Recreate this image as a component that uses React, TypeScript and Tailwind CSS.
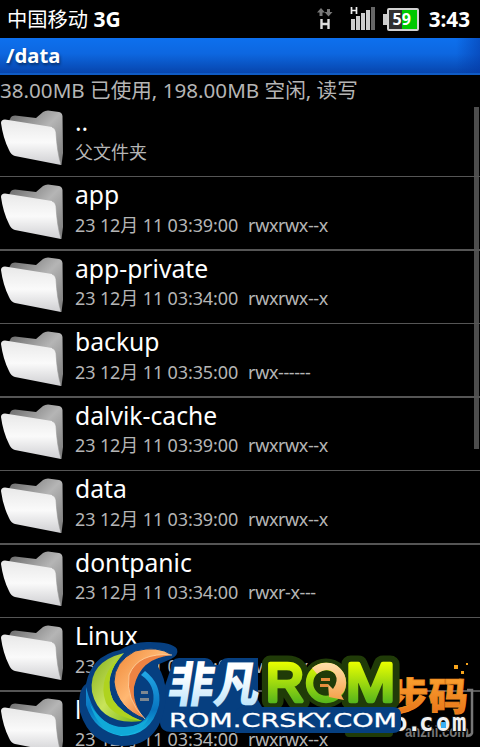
type Entry = { name: string; meta: string; mode?: string };

const entries: Entry[] = [
  { name: "..", meta: "父文件夹" },
  { name: "app", meta: "23 12月 11 03:39:00", mode: "rwxrwx--x" },
  { name: "app-private", meta: "23 12月 11 03:34:00", mode: "rwxrwx--x" },
  { name: "backup", meta: "23 12月 11 03:35:00", mode: "rwx------" },
  { name: "dalvik-cache", meta: "23 12月 11 03:39:00", mode: "rwxrwx--x" },
  { name: "data", meta: "23 12月 11 03:39:00", mode: "rwxrwx--x" },
  { name: "dontpanic", meta: "23 12月 11 03:34:00", mode: "rwxr-x---" },
  { name: "Linux", meta: "23 12月 11 03:34:00", mode: "rwxrwx--x" },
  { name: "local", meta: "23 12月 11 03:34:00", mode: "rwxrwx--x" },
];

const FolderIcon = () => (
  <svg width="65" height="58" viewBox="0 0 65 58" className="-mt-px shrink-0">
    <defs>
      <linearGradient id="back" x1="0" y1="0" x2="1" y2="1">
        <stop offset="0" stopColor="#666" />
        <stop offset=".5" stopColor="#b5b5b5" />
        <stop offset="1" stopColor="#777" />
      </linearGradient>
      <linearGradient id="front" x1="0" y1="0" x2="0" y2="1">
        <stop offset="0" stopColor="#e8e8e8" />
        <stop offset=".5" stopColor="#fafafa" />
        <stop offset="1" stopColor="#cfcfd2" />
      </linearGradient>
    </defs>
    <path d="M9 12 L11 8 Q12 6.500 15 6.500 L36 9 L43 3 Q45 1.500 48 1.500 L59 3 Q62 3.500 62.500 7 L63 44 L61.500 56 L50 40 Z" fill="url(#back)" />
    <path d="M1 14 Q1 10.500 5 10.500 L52 18 Q55.500 19 56 23 Q57 43 61 56 L15 47 Q11 46 9 41 Q3 29 1 14 Z" fill="url(#front)" />
    <path d="M52 18 Q55.500 19 56 23 Q57 43 61 56" fill="none" stroke="#999" strokeWidth=".6" />
  </svg>
);

const StatusBar = () => (
  <header className="flex h-[38px] items-center pl-[7px] pr-[10px] text-white">
    <span className="flex-1 whitespace-pre text-[20.3px] leading-[38px]">
      中国移动<b className="text-[21px]"> 3G</b>
    </span>
    <svg width="16" height="24" viewBox="0 0 16 24" className="mr-[17px]">
      <path d="M4 1 L0 5.500 H2.500 V9 H5.500 V5.500 H8 Z M11.500 9.500 L7.500 5 H10 V2 H13 V5 H15.500 Z" fill="#777" />
      <path d="M4.500 12 V22 M11.500 12 V22 M4.500 17 H11.500" stroke="#ddd" strokeWidth="2.400" fill="none" />
    </svg>
    <svg width="26" height="24" viewBox="0 0 26 24" className="mr-[7px]">
      <path d="M1.500 0 V7 M6.500 0 V7 M1.500 3.500 H6.500" stroke="#eee" strokeWidth="1.700" fill="none" />
      <path d="M1 12h4v11H1z M6 9h4v14H6z M11 6h4v17h-4z M16 3h4v20h-4z" fill="#ccc" />
      <path d="M21 0h4v23h-4z" fill="#666" />
    </svg>
    <div className="mr-[10px] flex h-[23px] w-[36px] items-center">
      <span className="h-[11px] w-1 bg-[#ccc]" />
      <span className="flex h-[23px] w-8 items-center justify-center rounded-[2px] border-2 border-[#d2d2d2] bg-[linear-gradient(90deg,#303030_46%,#00c800_46%)] pr-[2px] text-[16px] font-bold leading-none">
        59
      </span>
    </div>
    <b className="text-[20.7px] leading-[38px]">3:43</b>
  </header>
);

const FileRow = ({ entry, index }: { entry: Entry; index: number }) => {
  // Rows are 73.5px apart, so the divider alternates between one and two pixels.
  const odd = index % 2 === 1;
  const size =
    index === 0 ? "h-[74px] border-b pt-[7px]"
    : odd ? "h-[74px] border-b-2 pt-[7px]"
    : "h-[73px] border-b pt-[6px]";
  return (
    <li className={`flex shrink-0 border-[#555] ${size}`}>
      <FolderIcon />
      <div className={`ml-[10px] whitespace-pre ${odd ? "mt-[-4px]" : "mt-[-3px]"}`}>
        <div className="h-[30px] text-[24.7px] leading-[30px] text-white">{entry.name}</div>
        <div className={`h-[22px] text-[18px] leading-[22px] text-[#b5b5b5] ${odd || index === 0 ? "mt-1" : "mt-[3px]"} ${entry.mode ? "tracking-[-0.12px]" : ""}`}>
          {entry.meta}
          {entry.mode && <span className="ml-[10px] tracking-[-0.4px]">{entry.mode}</span>}
        </div>
      </div>
    </li>
  );
};

const BuzhiMark = () => (
  <svg width="140" height="97" viewBox="340 650 140 97" className="absolute left-[340px] top-[650px]">
    <defs>
      <linearGradient id="amber" x1="0" y1="0" x2="0" y2="1">
        <stop offset="0" stopColor="#ffad35" />
        <stop offset="1" stopColor="#e56d16" />
      </linearGradient>
    </defs>
    <path d="M467 690 H472 V733 Q471 736 466 736" stroke="#777" strokeWidth="2.500" fill="none" />
    <text x="405" y="737" textLength="64" lengthAdjust="spacingAndGlyphs" fontFamily="Liberation Sans" fontSize="16" fontWeight="bold" fill="#777">anzhi.com</text>
    <path d="M454 665h4v4h-4z M466 663h2v2h-2z M461 671h3v3h-3z" fill="#f8a51c" />
    <text x="389" y="710" textLength="79" lengthAdjust="spacingAndGlyphs" fontFamily="Noto Sans CJK SC" fontSize="38" fontWeight="900" fill="url(#amber)" stroke="#ef8c20" strokeWidth=".8">步码</text>
    <text x="393 407 419 436 452" y="731" fontFamily="DejaVu Sans Mono" fontSize="24" fontWeight="bold" fill="#f1f1f1" stroke="#111" strokeWidth="2" paintOrder="stroke">o.com</text>
    <path d="M441 722h5v6h-5z" fill="#39aef3" />
  </svg>
);

const RomMark = () => (
  <svg width="330" height="107" viewBox="75 640 330 107" className="absolute left-[75px] top-[640px]">
    <defs>
      <linearGradient id="lime" gradientUnits="userSpaceOnUse" x1="0" y1="662" x2="0" y2="703">
        <stop offset="0" stopColor="#eaff00" />
        <stop offset="1" stopColor="#55b51c" />
      </linearGradient>
      <linearGradient id="leaf" x1="0" y1="0" x2="1" y2="1">
        <stop offset="0" stopColor="#82ad1c" />
        <stop offset=".5" stopColor="#c9e45a" />
        <stop offset="1" stopColor="#75b512" />
      </linearGradient>
      <linearGradient id="flame" x1="0" y1="0" x2="1" y2="1">
        <stop offset="0" stopColor="#ee8433" />
        <stop offset=".45" stopColor="#ffb873" />
        <stop offset="1" stopColor="#d84b16" />
      </linearGradient>
      <linearGradient id="ice" x1="0" y1="0" x2="0" y2="1">
        <stop offset=".4" stopColor="#ffffff" />
        <stop offset="1" stopColor="#a9dcfa" />
      </linearGradient>
      <linearGradient id="sea" x1="0" y1="0" x2="0" y2="1">
        <stop offset="0" stopColor="#22a8e6" />
        <stop offset=".6" stopColor="#0875c0" />
        <stop offset="1" stopColor="#18bce5" />
      </linearGradient>
      <linearGradient id="peach" x1="0" y1="0" x2="0" y2="1">
        <stop offset="0" stopColor="#ffe0aa" />
        <stop offset="1" stopColor="#f5a04a" />
      </linearGradient>
    </defs>

    {/* navy backing */}
    <path d="M171 668 Q171 658 179 658 H205 Q211 658 214 665 L219 665 Q221 658 228 658 H258 V700 L262 707 H270 V732 H172 Q160 732 160 722 V700 Z" fill="#063f80" />
    <path d="M120 650 Q135 641 150 642 Q172 642 177 649 Q179 655 171 659 L157 665 Q166 678 166 695 Q163 745 123 746 Q90 745 80 712 Q77 690 86 684 Q91 656 120 650 Z" fill="#063f80" />
    <path d="M141 691h7v3h-7z M140 698h9v3h-9z" fill="#7c8790" />

    {/* swirl */}
    <path d="M145 671 Q162 684 159 705 Q151 736 121 736 Q94 731 86 705 L86 687 Q95 725 121 728 Q147 728 153 703 Q156 685 141 675 Z" fill="url(#sea)" />
    <path d="M90 704 Q104 728 125 727 Q142 726 149 717 Q141 735 120 735 Q98 731 90 704 Z" fill="#10a9d8" />
    <path d="M124 653 Q88 662 92 692 Q100 726 142 721 Q121 713 113 700 Q102 676 124 653 Z" fill="url(#leaf)" />
    <path d="M124 653 Q96 676 106 703 Q115 718 142 721 Q121 713 113 700 Q102 676 124 653 Z" fill="#afd31e" />
    <path d="M172 655 Q158 645 135 651 Q114 662 114 682 Q117 708 145 719 Q132 704 134 687 Q140 658 172 655 Z" fill="url(#flame)" stroke="#063f80" strokeWidth="1" />
    <path d="M172 655 Q138 652 129 675 Q125 699 145 719 Q132 704 134 687 Q140 658 172 655 Z" fill="#ee8343" />
    <path d="M172 655 Q138 652 129 675 Q125 699 145 719" fill="none" stroke="#ffd6a3" strokeWidth=".8" />

    <text x="0" y="0" transform="translate(166 702) skewX(-9)" textLength="92" lengthAdjust="spacingAndGlyphs" fontFamily="Noto Sans CJK SC" fontSize="48" fontWeight="800" fill="url(#ice)">非凡</text>

    {/* ROM */}
    <g fontFamily="Liberation Sans" fontSize="53" strokeLinejoin="round">
      <g stroke="#203b08" strokeWidth="17" fill="#203b08">
        <text x="266" y="700.500" textLength="38" lengthAdjust="spacingAndGlyphs">R</text>
        <circle cx="326" cy="683" r="16" />
        <text x="346" y="700.500" textLength="49" lengthAdjust="spacingAndGlyphs">M</text>
      </g>
      <g fill="url(#lime)" stroke="url(#lime)" strokeWidth="4.500">
        <text x="266" y="700.500" textLength="38" lengthAdjust="spacingAndGlyphs">R</text>
        <text x="346" y="700.500" textLength="49" lengthAdjust="spacingAndGlyphs">M</text>
      </g>
    </g>
    <circle cx="326" cy="683" r="16.500" fill="none" stroke="url(#lime)" strokeWidth="7.500" />
    <path d="M312 668 Q322 660 334 664 Q347 671 346 685 Q345 692 341 695 L344 700 L329 697 L328 684 L333 689 Q339 681 335 674 Q328 666 317 674 Z" fill="url(#peach)" />
    <path d="M321 678h9v3h-9z M320 684h8v3h-8z" fill="#e58c3b" />

    <path d="M345 731h48v2q0 4-4 4h-40q-4 0-4-4z" fill="#203b08" />
    <path d="M235 716 Q235 707 243 707 H393 Q401 707 401 715 V725 Q401 733 393 733 H235 Z" fill="#063f80" />
    <text x="169" y="727" textLength="228" lengthAdjust="spacingAndGlyphs" fontFamily="DejaVu Sans" fontSize="19" fill="#fff" stroke="#fff" strokeWidth=".3">ROM.CRSKY.COM</text>
  </svg>
);

export default function App() {
  return (
    <main className="relative flex h-[747px] w-[480px] flex-col overflow-hidden bg-black font-['Noto_Sans','Noto_Sans_CJK_SC',sans-serif]">
      <StatusBar />
      <h1 className="h-[37px] border-b-2 border-[#0f5bc5] bg-[linear-gradient(90deg,transparent_95%,#0437a388),linear-gradient(#0d70ee,#0d67e0_45%,#0745ad)] pl-[6px] text-[20.3px] font-bold leading-[35px] text-white [text-shadow:1px_2px_3px_#0007]">
        /data
      </h1>
      <p className="h-7 whitespace-nowrap text-[20.6px] leading-[31px] text-[#b5b5b5]">
        38.00MB 已使用, 198.00MB 空闲, 读写
      </p>
      <ul className="flex min-h-0 flex-1 flex-col overflow-hidden">
        {entries.map((entry, i) => (
          <FileRow key={entry.name} entry={entry} index={i} />
        ))}
      </ul>
      <div className="absolute left-[474px] top-[107px] h-[342px] w-[5px] bg-[#555]/90" />
      <BuzhiMark />
      <RomMark />
    </main>
  );
}
